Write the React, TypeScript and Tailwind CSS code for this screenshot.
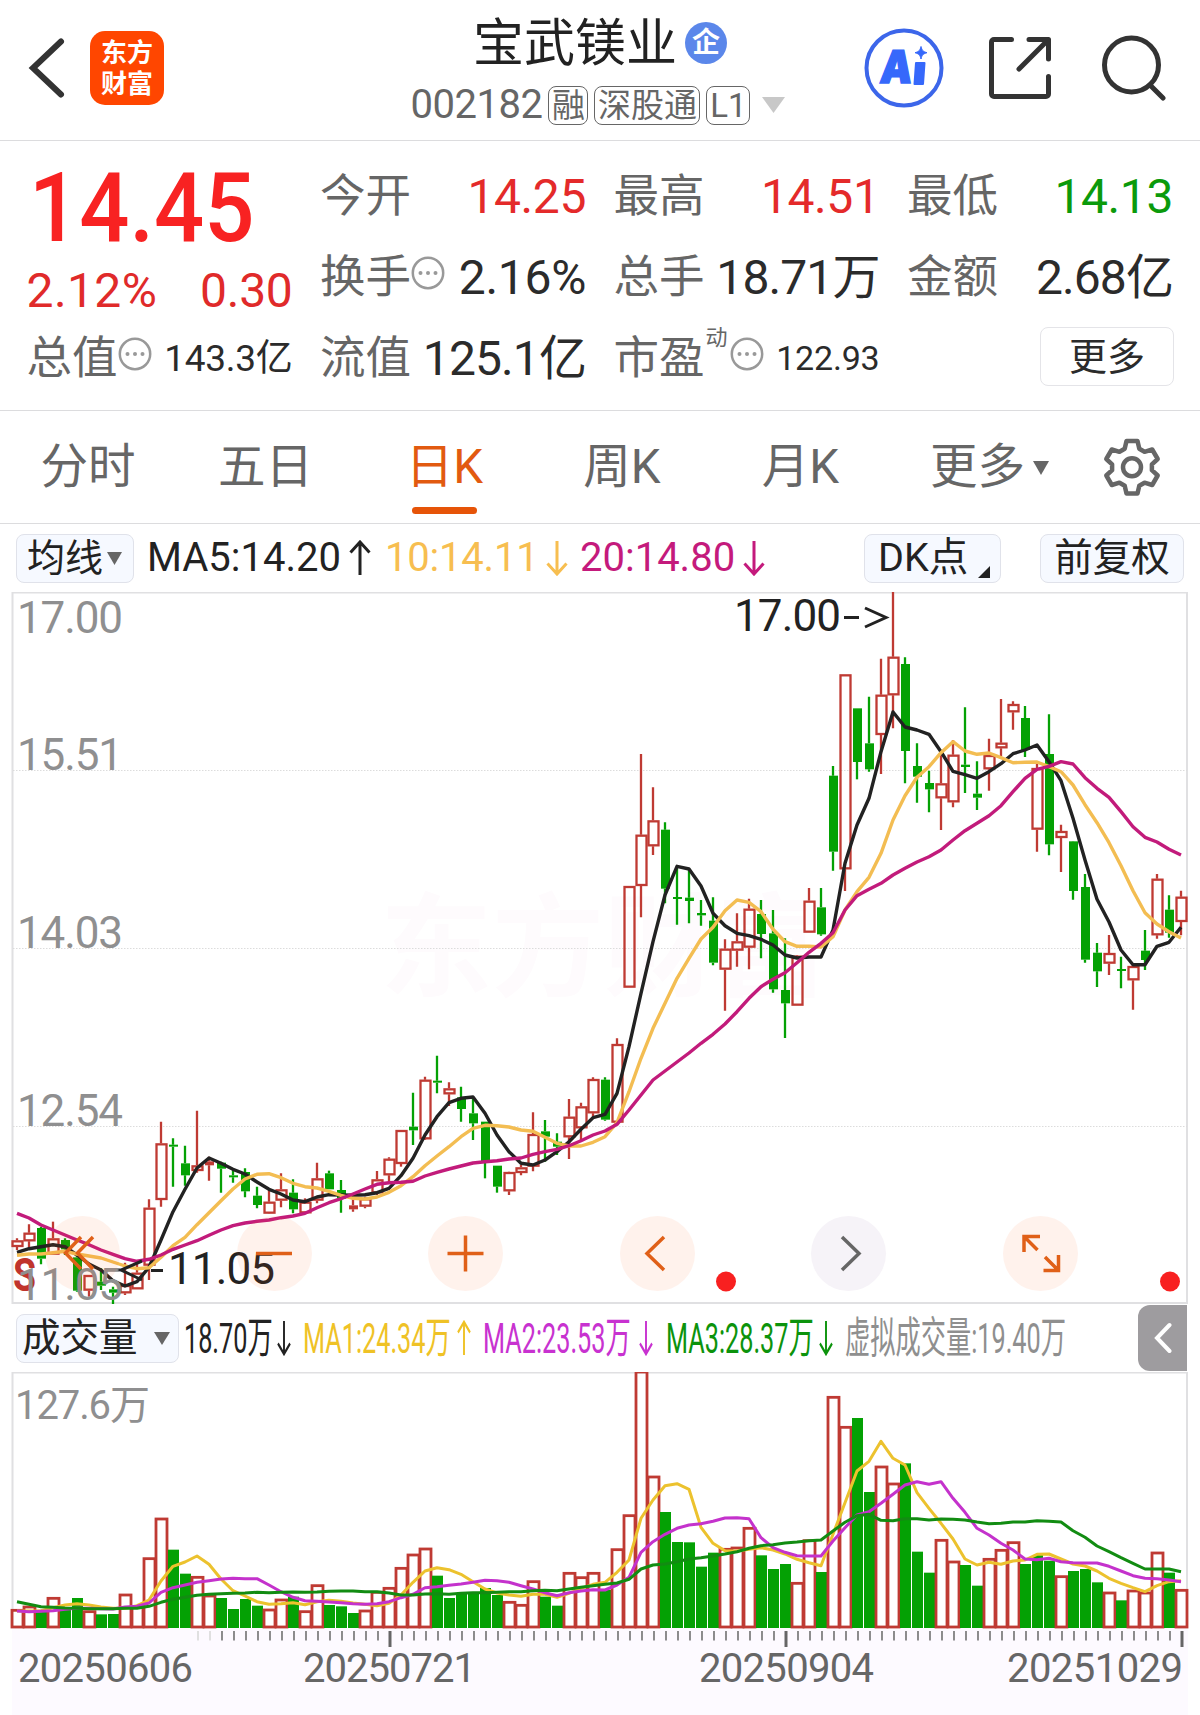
import type { ReactNode } from "react";

const RED = "#bf3a33";
const GREEN = "#04a104";

const x = (i: number) => 17 + 12 * i;
const nums = (s: string) => s.trim().split(/\s+/).map(Number);

// Vertical values are in thirds of a pixel, measured down from `base`
const scale = (base: number, s: string) => nums(s).map((v) => base + v / 3);
const line = (ys: number[]) => ys.map((y, i) => `${x(i)},${y.toFixed(1)}`).join(" ");

interface Candle {
  up: boolean;
  high: number;
  top: number;
  bottom: number;
  low: number;
}

function candles(base: number, s: string): Candle[] {
  return s
    .trim()
    .split(",")
    .map((row) => {
      const [kind, ...v] = row.trim().split(/\s+/);
      const [high, top, bottom, low] = v.map((n) => base + Number(n) / 3);
      return { up: kind === "r", high, top, bottom, low };
    });
}

// kind high top bottom low
const CANDLES = [
  ...candles(
    1020,
    `r 655 661 681 690, r 613 638 664 688, g 620 624 716 733, r 605 655 704 704, g 655 660 688 705,
     g 705 712 812 815, r 765 765 812 830, g 745 785 797 810, g 800 808 818 852, r 728 795 820 825,
     r 728 758 808 808, r 538 563 737 780, r 305 370 540 560, g 355 374 380 500, g 377 430 466 497,
     r 272 436 453 458, r 410 424 436 482, g 425 428 446 518, g 450 466 472 488, g 445 456 514 532,
     g 500 527 555 565, r 510 545 581 582, r 460 508 542 562, g 478 518 568 580, r 535 545 580 580,
     r 428 475 542 550, g 452 460 508 508, g 480 510 536 578, r 535 556 568 575, r 530 535 560 565,
     r 453 478 520 525, r 412 416 466 490, r 330 330 432 440, g 218 320 331 375, r 170 179 358 360,
     g 107 182 188 220, r 187 205 223 258, g 200 232 267 305, g 235 280 310 360, g 305 305 425 475,
     g 437 437 500 518, r 455 456 514 525, r 435 442 459 466, r 277 342 440 454, g 300 334 350 425,
     g 340 365 380 405, r 237 290 352 417, r 248 259 325 362, r 172 177 280 290, g 172 179 299 302,
     r 55 72 308 310`
  ),
  ...candles(
    640,
    `r 738 738 1043 1043, r 342 584 738 832, r 442 541 619 645, g 547 569 746 790, g 685 771 777 854,
     g 685 773 783 850, g 780 819 826 857, g 772 842 968 976, r 898 926 989 1112, r 820 904 932 980,
     r 776 806 923 988, g 780 822 882 955, g 810 880 1048 1058, g 895 1050 1090 1194, r 945 947 1097 1097,
     r 744 782 878 878, g 744 802 883 887, g 378 407 635 692, r 103 103 688 753, g 205 205 366 418,
     g 170 310 388 395, r 56 164 285 402, r -144 50 166 265, g 52 72 333 430, g 310 378 410 488,
     g 392 429 448 517, r 335 430 475 570, r 300 344 487 502, g 202 374 381 459, g 364 461 473 510,
     r 296 345 388 452, r 177 308 325 348, r 184 192 217 269, g 198 234 330 351, r 368 384 569 635,
     g 223 342 613 646, r 554 573 594 696, g 603 604 753 779, g 702 741 959 968, g 909 938 994 1041,
     r 885 939 971 1005, g 950 987 993 1045, r 972 978 1021 1109, g 870 932 960 990, r 702 716 886 896,
     g 766 809 878 893, r 752 770 846 886`
  ),
];

const MA5 = [
  ...scale(
    1020,
    `697 686 680 674 680 705 732 750 782 798 785 742 660 575 508 444 414 430 448 462 486 508 522 540 545
     531 524 525 526 524 518 505 467 415 345 290 248 235 231 280 345 395 430 435 420 395 365 328 293 283 220`
  ),
  ...scale(
    640,
    `1220 1060 905 765 679 687 738 820 857 880 887 898 915 945 954 951 951 870 670 555 475 335 216
     261 270 283 335 394 404 415 395 371 341 330 315 365 422 535 660 778 846 930 974 974 919 907 862`
  ),
];

const MA10 = [
  ...scale(
    1020,
    `706 702 702 698 694 702 708 714 726 738 746 743 712 677 652 614 578 542 507 477 463 461 473 490 500
     504 514 526 535 537 531 517 497 470 437 408 380 350 325 316 317 321 330 334 352 370 378 378 367 350 308`
  ),
  ...scale(
    640,
    `1355 1255 1165 1090 1015 955 897 862 812 780 787 815 868 905 919 919 921 890 810 755 712 640 540
     467 412 380 338 305 333 343 339 353 368 367 366 380 395 435 494 548 608 677 752 818 852 875 894`
  ),
];

const MA20 = [
  ...scale(
    1020,
    `580 594 615 630 645 660 674 690 703 716 724 718 705 688 675 662 646 630 617 609 604 600 593 588 580
     563 548 536 522 507 493 488 487 484 468 457 447 438 429 425 422 417 414 403 395 388 377 362 345 333 313`
  ),
  ...scale(
    640,
    `1410 1365 1320 1293 1266 1239 1210 1183 1152 1115 1075 1040 1018 998 968 937 910 878 810 767 748 730 705
     685 666 650 630 600 572 550 527 497 455 415 388 379 365 372 413 445 472 515 560 592 606 628 645`
  ),
];

const VOLUME = `r736 r726 g735 r700 g735 g699 r740 g748 g747 r690 r727 r581 r462 g554 g626 r637 r693 g699 g732 g702
  g722 r735 r705 g695 r740 r662 g720 g724 g744 r738 r682 r670 r610 r570 r552 g632 g699 g687 g683 g669
  g690 r712 r721 r650 g695 g722 r625 r638 r625 g675 r554 r452 r21 r336 g441 g531 g532 g605 g563 r553
  r549 r490 g571 g612 g597 r655 r527 g621 r97 r187 g159 g381 r306 r357 g295 g560 g623 r526 r591 g600
  g662 r583 r556 r533 g597 g570 g587 r635 g618 g612 g652 r684 g706 r678 r684 r564 g623 r676`
  .split(/\s+/)
  .map((s) => ({ up: s[0] === "r", top: 1365 + Number(s.slice(1)) / 3 }));

const VOL_MA1 = scale(
  1365,
  `738 738 737 728 720 716 720 726 730 730 722 705 648 604 591 573 598 642 677 693 710 718 716 713 719
   710 706 709 714 718 722 715 690 652 618 608 614 628 650 672 684 690 694 688 688 697 685 670 658 652
   622 585 460 405 362 356 373 487 535 557 558 553 548 555 567 583 593 602 508 413 318 289 229 280 300
   383 430 475 522 582 600 592 598 588 585 568 567 582 597 603 618 640 655 668 680 662 650 647`
);

const VOL_MA2 = scale(
  1365,
  `738 740 739 737 733 730 730 731 732 726 724 714 682 668 660 652 647 642 640 641 641 660 680 697 707
   709 711 713 716 718 716 710 698 688 668 665 661 657 652 646 647 652 662 672 683 692 683 678 674 675
   660 637 562 530 508 490 480 476 469 459 458 461 518 548 562 572 573 573 528 488 450 440 415 388 360
   350 358 350 400 442 490 510 535 555 582 584 580 590 593 594 594 604 618 632 640 641 645 650`
);

const VOL_MA3 = scale(
  1365,
  `710 718 725 727 729 730 731 731 731 730 730 724 712 703 697 691 688 686 685 684 682 683 682 681 682
   681 679 678 678 680 680 684 690 690 687 686 688 685 683 683 682 680 680 677 676 677 672 667 662 658
   654 643 612 600 597 590 582 578 573 567 560 550 542 539 534 531 527 525 498 472 452 448 466 467 461
   461 465 462 463 465 471 476 475 471 471 467 469 471 497 517 543 560 578 595 612 612 612 620`
);

const GRID = [770.5, 948.5, 1126.5];

export default function App() {
  return (
    <div className="flex h-[1715px] w-[1200px] flex-col overflow-hidden bg-white font-['Roboto','Noto_Sans_CJK_SC',sans-serif] leading-none text-[#2b2b2b]">
      <Header />
      <Quote />
      <Tabs />
      <Indicators />
      <PriceChart />
      <VolumeBar />
      <VolumeChart />
    </div>
  );
}

function Header() {
  return (
    <header className="flex h-[141px] shrink-0 border-b border-[#dcdcde]">
      <div className="flex w-[398px] items-center pb-1 pl-7">
        <svg width="38" height="62" viewBox="0 0 38 62" fill="none" className="shrink-0">
          <path d="M33 4.500 5 31l28 26.500" stroke="#333" strokeWidth="6" strokeLinecap="round" />
        </svg>
        <div className="ml-6 flex size-[74px] flex-col items-center justify-center rounded-[15px] bg-[#ff4600] pt-[2px] text-[26px] leading-[31px] font-bold text-white">
          <span>东方</span>
          <span>财富</span>
        </div>
      </div>

      <div className="flex w-[400px] flex-col items-center">
        <div className="mt-[18px] flex h-[50px] items-center pl-1">
          <span className="text-[51px] text-[#222]">宝武镁业</span>
          <span className="ml-2 flex size-[42px] items-center justify-center rounded-full bg-[#5b87ea] text-[28px] font-bold text-white">
            企
          </span>
        </div>
        <div className="mt-[17px] flex h-10 items-center text-[#666] whitespace-nowrap">
          <span className="text-[40px] tracking-[-0.5px]">002182</span>
          <Tag className="ml-[6px] w-10">融</Tag>
          <Tag className="ml-[6px] w-[106px]">深股通</Tag>
          <Tag className="ml-[6px] w-11">L1</Tag>
          <svg width="23" height="16" viewBox="0 0 23 16" className="ml-3 shrink-0">
            <path d="M0 0h23L11.500 16z" fill="#c8c8c8" />
          </svg>
        </div>
      </div>

      <div className="flex w-[402px] items-center pb-1 pl-[66px]">
        <svg width="80" height="80" viewBox="0 0 80 80">
          <circle cx="40" cy="40" r="37.500" fill="none" stroke="#3c66ea" strokeWidth="4" />
          <text
            x="0"
            y="0"
            transform="translate(15 55) skewX(-6)"
            fontSize="45"
            fontWeight="900"
            className="fill-[#3668fb] font-[Inter]"
            textLength="32"
            lengthAdjust="spacingAndGlyphs"
            stroke="#3668fb"
            strokeWidth="1.500"
          >
            A
          </text>
          <path d="M52 35h8.500l-1.500 21h-8.500z" fill="#3668fb" stroke="#3668fb" strokeWidth="2" strokeLinejoin="round" />
          <path d="M57 18.500c1 4 2 5 6 6.200-4 1.200-5 2.200-6 6.300-1-4-2-5.100-6-6.300 4-1.200 5-2.200 6-6.200z" fill="#3668fb" stroke="#3668fb" />
        </svg>
        <svg width="62" height="62" viewBox="0 0 62 62" fill="none" stroke="#333" strokeWidth="5" strokeLinecap="round" strokeLinejoin="round" className="ml-[45px]">
          <path d="M22.500 2.500H5a2.500 2.500 0 0 0-2.500 2.500v52A2.500 2.500 0 0 0 5 59.500h52a2.500 2.500 0 0 0 2.500-2.500V39.500M40 2.500h19.500V22M30 32 58.500 3.500" />
        </svg>
        <svg width="66" height="66" viewBox="0 0 66 66" fill="none" stroke="#333" strokeWidth="5" strokeLinecap="round" className="ml-[50px]">
          <circle cx="30.500" cy="30" r="27" />
          <path d="m49 50 13 13" />
        </svg>
      </div>
    </header>
  );
}

function Tag({ className, children }: { className: string; children: ReactNode }) {
  return (
    <span className={`flex h-[39px] shrink-0 items-center justify-center rounded-[8px] border border-[#666] text-[33px] ${className}`}>
      {children}
    </span>
  );
}

function Dots() {
  return (
    <svg width="34" height="34" viewBox="0 0 34 34" className="mb-2 shrink-0">
      <circle cx="17" cy="17" r="15.200" fill="none" stroke="#999" strokeWidth="2.500" />
      <g fill="#999">
        <circle cx="9.500" cy="17" r="2" />
        <circle cx="17" cy="17" r="2" />
        <circle cx="24.500" cy="17" r="2" />
      </g>
    </svg>
  );
}

function Stat({ label, value, info, className = "text-[48px] tracking-[-0.9px]" }: { label: string; value: string; info?: boolean; className?: string }) {
  return (
    <div className="flex h-[81px] items-center justify-between whitespace-nowrap">
      <span className="flex items-center text-[45.500px] text-[#666]">
        <span className="pt-[3px]">{label}</span>
        {info && <Dots />}
      </span>
      <span className={`pt-[2px] ${className}`}>{value}</span>
    </div>
  );
}

function Quote() {
  return (
    <section className="grid h-[270px] shrink-0 grid-cols-[266px_266px_266px_266px] gap-x-[27.500px] border-b border-[#dcdcde] pt-[14px] pl-[26.500px]">
      <div>
        <div className="flex h-[162px] flex-col text-[#f82222]">
          <div className="mt-[5px] ml-[2px] h-[96px] origin-left scale-x-[0.92] text-[96px] leading-[96px] font-medium">14.45</div>
          <div className="mt-[11px] flex justify-between text-[48px] text-[#e02a2a]">
            <span className="tracking-[0.4px]">2.12%</span>
            <span className="tracking-[-0.3px]">0.30</span>
          </div>
        </div>
        <Stat label="总值" value="143.3亿" info className="text-[37px] tracking-[-0.3px]" />
      </div>
      <div>
        <Stat label="今开" value="14.25" className="text-[48px] tracking-[-0.4px] text-[#e42a2a]" />
        <Stat label="换手" value="2.16%" info className="text-[48px] tracking-[-0.3px]" />
        <Stat label="流值" value="125.1亿" />
      </div>
      <div>
        <Stat label="最高" value="14.51" className="text-[48px] tracking-[-0.4px] text-[#e42a2a]" />
        <Stat label="总手" value="18.71万" />
        <div className="flex h-[81px] items-center justify-between">
          <span className="flex items-center text-[45.500px] text-[#666]">
            <span className="pt-[3px]">市盈</span>
            <span className="mb-10 ml-px text-[22px]">动</span>
            <span className="ml-[2px] flex">
              <Dots />
            </span>
          </span>
          <span className="text-[34px] tracking-[-0.2px]">122.93</span>
        </div>
      </div>
      <div>
        <Stat label="最低" value="14.13" className="text-[48px] tracking-[-0.4px] text-[#0b9a0b]" />
        <Stat label="金额" value="2.68亿" />
        <button className="mt-[10px] ml-[133px] flex h-[59px] w-[134px] items-center justify-center rounded-[8px] border border-[#e4e4e8] text-[38px]">
          更多
        </button>
      </div>
    </section>
  );
}

function Tabs() {
  return (
    <nav className="flex h-[113px] shrink-0 border-b border-[#dcdcde] pt-px text-[47.500px] text-[#666]">
      <span className="flex w-[176px] items-center justify-center">分时</span>
      <span className="flex w-[176px] items-center justify-center pl-[3px]">五日</span>
      <span className="relative flex w-[194px] items-center justify-center pr-[9px] text-[#e25a10]">
        日K
        <i className="absolute bottom-[9px] left-[60px] h-[7px] w-[65px] rounded-full bg-[#e65408]" />
      </span>
      <span className="flex w-[152px] items-center justify-center">周K</span>
      <span className="flex w-[205px] items-center justify-center">月K</span>
      <span className="flex items-center pl-[27px]">
        更多
        <Triangle className="ml-2 h-[14px] w-4" />
      </span>
      <svg width="58" height="58" viewBox="0 0 58 58" fill="none" stroke="#666" strokeWidth="4.500" strokeLinejoin="round" className="mt-[26px] ml-[54px]">
        <path d="M23.500 3h11l1.800 7.800 5.200 3 7.700-2.300L54.700 21l-5.800 5.300v5.900l5.800 5.300-5.500 9.500-7.700-2.300-5.200 3L34.500 55.500h-11l-1.800-7.800-5.200-3L8.800 47l-5.500-9.500 5.800-5.300v-5.900L3.300 21l5.500-9.500 7.700 2.300 5.200-3z" />
        <circle cx="29" cy="29.200" r="9" />
      </svg>
    </nav>
  );
}

function Triangle({ className }: { className: string }) {
  return (
    <svg viewBox="0 0 16 14" preserveAspectRatio="none" className={`shrink-0 ${className}`}>
      <path d="M0 0h16L8 14z" fill="#666" />
    </svg>
  );
}

function Arrow({ up, className }: { up?: boolean; className: string }) {
  return (
    <svg viewBox="0 0 22 36" preserveAspectRatio="none" fill="none" stroke="currentColor" strokeWidth="3" className={`h-9 shrink-0 ${className}`}>
      <path d={up ? "M11 35V2M1.500 12.500 11 2l9.500 10.500" : "M11 1v33M1.500 23.500 11 34l9.500-10.500"} />
    </svg>
  );
}

function Indicators() {
  return (
    <div className="flex h-[68px] shrink-0 items-center pl-4 text-[40px] whitespace-nowrap">
      <button className="flex h-[49px] w-[118px] items-center rounded-[8px] border border-[#e0e2ea] bg-[#f6f9ff] pl-[10px] text-[38px] text-[#222]">
        均线
        <Triangle className="ml-1 h-[13px] w-[15px]" />
      </button>
      <span className="flex w-[240px] items-center pl-[13px] text-[#222]">
        <span className="w-[202px]">MA5:14.20</span>
        <Arrow up className="w-[22px]" />
      </span>
      <span className="flex w-[206px] items-center pl-[11px] text-[#f7be50]">
        <span className="w-[161px] tracking-[-0.2px]">10:14.11</span>
        <Arrow className="w-[22px]" />
      </span>
      <span className="flex w-[284px] items-center text-[#c41a7c]">
        <span className="w-[163px]">20:14.80</span>
        <Arrow className="w-[22px]" />
      </span>
      <button className="flex h-[49px] w-[137px] items-center rounded-[8px] border border-[#e0e2ea] bg-[#f6f9ff] pl-[13px] text-[39.500px] text-[#222]">
        DK点
        <svg width="12" height="12" viewBox="0 0 12 12" className="mt-7 ml-[10px]">
          <path d="M12 0v12H0z" fill="#222" />
        </svg>
      </button>
      <button className="ml-[39px] flex h-[49px] w-[144px] items-center justify-center rounded-[8px] border border-[#e0e2ea] bg-[#f6f9ff] text-[38.500px] text-[#222]">
        前复权
      </button>
    </div>
  );
}

function PriceChart() {
  return (
    <div className="relative h-[712px] shrink-0">
      <svg width="1200" height="712" viewBox="0 592 1200 712" fill="none" className="block">
        <text x="380" y="988" fontSize="112" fontWeight="700" fill="#fefbfd">
          东方财富
        </text>
        <path d="M12.500 1303V592.500H1187V1303z" stroke="#e0e0e2" strokeWidth="2" />
        {GRID.map((y) => (
          <path key={y} d={`M13 ${y}H1187`} stroke="#dcdcdc" strokeWidth="1" strokeDasharray="1.500 1.500" />
        ))}
        <text x="13" y="1291" fontSize="46" fontWeight="700" fill="#c0342c" textLength="23" lengthAdjust="spacingAndGlyphs">
          S
        </text>

        {CANDLES.map((c, i) => {
          const color = c.up ? RED : GREEN;
          const thin = c.bottom - c.top < 5;
          return (
            <g key={i} stroke={color} strokeWidth="2.300">
              <path d={`M${x(i)} ${c.high}V${c.top}M${x(i)} ${c.bottom}V${c.low}`} />
              {c.up && !thin ? (
                <rect x={x(i) - 4.5} y={c.top + 1} width="10" height={c.bottom - c.top - 2} />
              ) : (
                <rect x={x(i) - 4} y={c.top} width="9" height={c.bottom - c.top} fill={color} stroke="none" />
              )}
            </g>
          );
        })}

        <g strokeWidth="3.400" strokeLinejoin="round">
          <polyline points={line(MA5)} stroke="#222" />
          <polyline points={line(MA10)} stroke="#f3bd52" />
          <polyline points={line(MA20)} stroke="#c21b7b" />
        </g>

        <g fontSize="44" fill="#8f8f90">
          <text x="17" y="633" textLength="106">17.00</text>
          <text x="17" y="770" textLength="106">15.51</text>
          <text x="17" y="948" textLength="106">14.03</text>
          <text x="17" y="1126" textLength="106">12.54</text>
          <text x="17" y="1300" textLength="106">11.05</text>
        </g>
        <g fontSize="44" fill="#222">
          <text x="734" y="631" textLength="107">17.00</text>
          <text x="168" y="1284" textLength="107">11.05</text>
        </g>
        <path d="M844 617.500h15M865 608l21 9.500-21 9.500M142 1261l-21 9 21 10M151 1270.500h12" stroke="#222" strokeWidth="3" />

        <circle cx="726" cy="1281.500" r="10" fill="#f82020" />
        <circle cx="1170" cy="1281.500" r="10" fill="#f82020" />
      </svg>

      {/* Zoom and pan controls */}
      <div className="absolute top-[624px] left-[45px] flex gap-[116.500px]">
        <Control d="M36 21 20.500 37 36 53M48 21 32.500 37 48 53" />
        <Control d="M19 37.500h36" />
        <Control d="M19.500 37.500h36M37.500 19.500v36" />
        <Control d="M44 21 27 37.500 44 54" />
        <Control gray d="M31 21 48 37.500 31 54" />
        <Control d="M21 36V20.500h16M21.500 21 34.500 34M40.500 54.500h15v-15.500M55 54 42 41" />
      </div>
    </div>
  );
}

function Control({ d, gray }: { d: string; gray?: boolean }) {
  return (
    <button className={`size-[75px] shrink-0 rounded-full ${gray ? "bg-[#f6f3f8]" : "bg-[#ff5a14]/8"}`}>
      <svg width="75" height="75" viewBox="0 0 75 75" fill="none" stroke={gray ? "#666" : "#e06018"} strokeWidth="3.500">
        <path d={d} />
      </svg>
    </button>
  );
}

function Squeezed({ className, children }: { className: string; children: ReactNode }) {
  return (
    <span className={`block shrink-0 ${className}`}>
      <span className="block w-max origin-left scale-x-[0.587]">{children}</span>
    </span>
  );
}

function VolumeBar() {
  return (
    <div className="flex h-[68px] shrink-0 items-center pl-[16px] text-[43px] whitespace-nowrap text-[#222]">
      <button className="mr-[5px] flex h-[49px] w-[163px] shrink-0 items-center rounded-[8px] border border-[#e0e2ea] bg-[#f6f9ff] pl-[5px] text-[38.500px]">
        成交量
        <Triangle className="ml-4 h-[13px] w-4" />
      </button>
      <Squeezed className="w-[93px]">18.70万</Squeezed>
      <Arrow className="w-[14px]" />
      <span className="flex items-center pl-[12px] text-[#efc226]">
        <Squeezed className="w-[154px]">MA1:24.34万</Squeezed>
        <Arrow up className="w-[14px]" />
      </span>
      <span className="flex items-center pl-[12px] text-[#c832d0]">
        <Squeezed className="w-[156px]">MA2:23.53万</Squeezed>
        <Arrow className="w-[14px]" />
      </span>
      <span className="flex items-center pl-[13px] text-[#0c930c]">
        <Squeezed className="w-[153px]">MA3:28.37万</Squeezed>
        <Arrow className="w-[14px]" />
      </span>
      <span className="pl-[12px] text-[#8f8f8f]">
        <Squeezed className="w-[293px]">虚拟成交量:19.40万</Squeezed>
      </span>
      <button className="flex h-[66px] w-[49px] shrink-0 items-center justify-center rounded-l-[12px] bg-[#9e9c9f]">
        <svg width="18" height="32" viewBox="0 0 18 32" fill="none">
          <path d="M15.500 3 3 16l12.500 13" stroke="#fff" strokeWidth="4" strokeLinecap="round" />
        </svg>
      </button>
    </div>
  );
}

function VolumeChart() {
  return (
    <svg width="1200" height="343" viewBox="0 1372 1200 343" fill="none" className="block shrink-0">
      <rect x="12" y="1628" width="1176" height="87" fill="#fdfaff" />
      <path d="M12.500 1628V1372.500H1187V1628" stroke="#e0e0e2" strokeWidth="2" />
      <text x="15" y="1419" fontSize="40" fill="#8f8f90" textLength="135">
        127.6万
      </text>

      {VOLUME.map((v, i) =>
        v.up ? (
          <rect key={i} x={x(i) - 5} y={v.top} width="11" height={1627 - v.top} stroke={RED} strokeWidth="2.800" />
        ) : (
          <rect key={i} x={x(i) - 5} y={v.top} width="11" height={1628 - v.top} fill={GREEN} />
        )
      )}

      <g strokeWidth="3" strokeLinejoin="round">
        <polyline points={line(VOL_MA1)} stroke="#ecc22e" />
        <polyline points={line(VOL_MA2)} stroke="#c432cc" />
        <polyline points={line(VOL_MA3)} stroke="#128c12" />
      </g>

      {VOLUME.map((_, i) => {
        if (i < 15) return null;
        const major = i % 33 === 31;
        return (
          <path
            key={i}
            d={`M${x(i) + 1} 1631v${major ? 16 : 9.5}`}
            stroke={major ? "#666" : i < 17 ? "#ddd" : "#808080"}
            strokeWidth={major ? 3 : 1.8}
          />
        );
      })}

      <g fontSize="40" fill="#666">
        <text x="18" y="1682" textLength="175">20250606</text>
        <text x="303" y="1682" textLength="173">20250721</text>
        <text x="699" y="1682" textLength="175">20250904</text>
        <text x="1007" y="1682" textLength="176">20251029</text>
      </g>
    </svg>
  );
}
